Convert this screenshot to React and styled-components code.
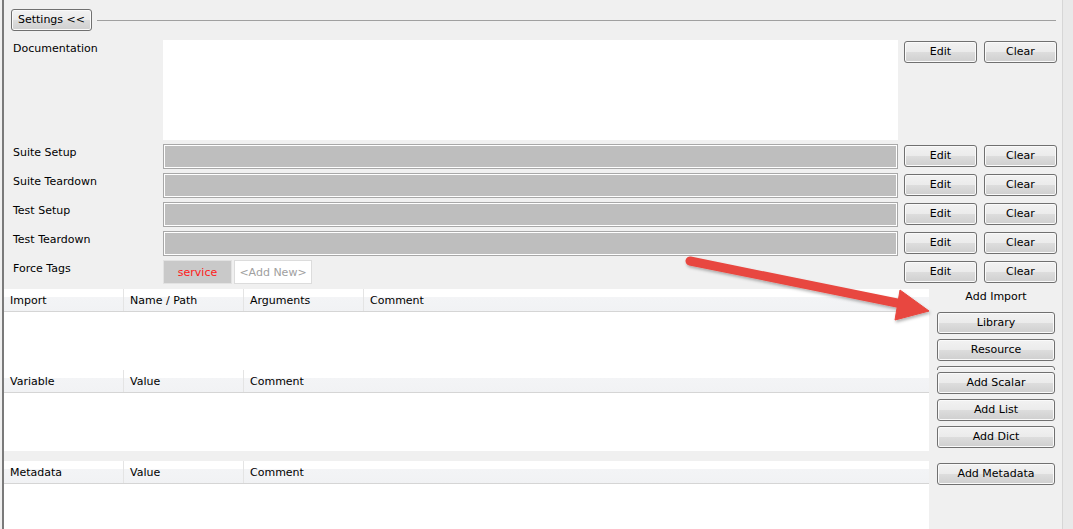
import React from "react";
import styled, { createGlobalStyle } from "styled-components";

const GlobalStyle = createGlobalStyle`
  *, *::before, *::after { box-sizing: border-box; }
  html, body { margin: 0; padding: 0; background: #f0f0f0; }
  body {
    font-family: "DejaVu Sans", Verdana, sans-serif;
    font-size: 11px;
    color: #000;
  }
`;

const Frame = styled.div`
  position: relative;
  width: 1073px;
  height: 529px;
  overflow: hidden;
  display: flex;
  background: #f0f0f0;
`;

const Main = styled.div`
  flex: 1;
  min-width: 0;
  margin-left: 2px;
  border-left: 2px solid #7a7a7a;
  display: flex;
  flex-direction: column;
`;

const ScrollStrip = styled.div`
  width: 11px;
  border-left: 1px solid #d6d6d6;
  background: #e9e9e9;
`;

const SettingsArea = styled.div`
  padding: 9px 5px 0 7px;
`;

const SettingsHeader = styled.div`
  display: flex;
  align-items: center;
  gap: 5px;
  height: 22px;
`;

const HeaderRule = styled.div`
  flex: 1;
  height: 1px;
  margin-right: 1px;
  background: #a0a0a0;
`;

const Button = styled.button`
  font-family: inherit;
  font-size: 11px;
  color: #000;
  height: 22px;
  width: ${(p) => p.$w || 73}px;
  flex-shrink: 0;
  padding: 0;
  margin: 0;
  margin-left: ${(p) => p.$ml || 0}px;
  margin-top: ${(p) => p.$mt || 0}px;
  border: 1px solid #707070;
  border-radius: 3px;
  background: linear-gradient(#f2f2f2 0%, #ebebeb 50%, #dddddd 51%, #cfcfcf 100%);
  box-shadow: inset 0 0 0 1px #fafafa;
  text-align: center;
  line-height: 20px;
`;

const Rows = styled.div`
  margin-top: 9px;
  display: flex;
  flex-direction: column;
  gap: 4px;
`;

const Row = styled.div`
  display: flex;
  align-items: flex-start;
`;

const Label = styled.div`
  width: 152px;
  padding-left: 2px;
  padding-top: 1px;
  line-height: 15px;
  flex-shrink: 0;
`;

const DocField = styled.div`
  flex: 1;
  height: 100px;
  background: #fff;
`;

const GrayField = styled.div`
  flex: 1;
  height: 25px;
  border: 1px solid #a8a8a8;
  box-shadow: inset 0 0 0 1px #ffffff;
  background: #bebebe;
`;

const TagField = styled.div`
  flex: 1;
  height: 24px;
  display: flex;
  gap: 2px;
`;

const Tag = styled.div`
  width: ${(p) => p.$w}px;
  height: 24px;
  display: flex;
  align-items: center;
  justify-content: center;
  border: 1px solid ${(p) => (p.$add ? "#dcdcdc" : "#e2e2e2")};
  background: ${(p) => (p.$add ? "#ffffff" : "#c9c9c9")};
  color: ${(p) => (p.$add ? "#a0a0a0" : "#ff1a1a")};
`;

const Lower = styled.div`
  margin-top: 5px;
  flex: 1;
  display: flex;
  flex-direction: column;
`;

const Section = styled.div`
  display: flex;
  height: ${(p) => (p.$h ? `${p.$h}px` : "auto")};
  flex: ${(p) => (p.$h ? "none" : "1")};
  margin-top: ${(p) => p.$mt || 0}px;
  overflow: hidden;
`;

const Grid = styled.div`
  flex: 1;
  background: #fff;
  display: flex;
  flex-direction: column;
`;

const GridHeader = styled.div`
  display: grid;
  grid-template-columns: ${(p) => "120px ".repeat(p.$n - 1)}1fr;
  height: 23px;
  border-bottom: 1px solid #d5d5d5;
  background: linear-gradient(#ffffff 0%, #ffffff 36%, #f3f4f6 37%, #f1f2f4 100%);
`;

const HeaderCell = styled.div`
  display: flex;
  align-items: center;
  padding-left: 6px;
  padding-top: 1px;
  border-right: 1px solid #e4e4e4;
  white-space: nowrap;
  &:last-child { border-right: none; }
`;

const Panel = styled.div`
  width: 133px;
  flex-shrink: 0;
  padding: ${(p) => p.$pt || 0}px 7px 0 8px;
  display: flex;
  flex-direction: column;
  gap: 5px;
  overflow: hidden;
`;

const PanelLabel = styled.div`
  height: 18px;
  line-height: 16px;
  text-align: center;
  flex-shrink: 0;
`;

const ArrowLayer = styled.svg`
  position: absolute;
  left: 0;
  top: 0;
  width: 1073px;
  height: 529px;
  pointer-events: none;
`;

const settingRows = ["Suite Setup", "Suite Teardown", "Test Setup", "Test Teardown"];

function GridTable({ cols }) {
  return (
    <Grid>
      <GridHeader $n={cols.length}>
        {cols.map((c) => (
          <HeaderCell key={c}>{c}</HeaderCell>
        ))}
      </GridHeader>
    </Grid>
  );
}

function EditClear() {
  return (
    <>
      <Button $ml={6} $mt={1}>Edit</Button>
      <Button $ml={7} $mt={1}>Clear</Button>
    </>
  );
}

export default function App() {
  return (
    <>
      <GlobalStyle />
      <Frame>
        <Main>
          <SettingsArea>
            <SettingsHeader>
              <Button $w={81}>Settings &lt;&lt;</Button>
              <HeaderRule />
            </SettingsHeader>
            <Rows>
              <Row>
                <Label>Documentation</Label>
                <DocField />
                <EditClear />
              </Row>
              {settingRows.map((r) => (
                <Row key={r}>
                  <Label>{r}</Label>
                  <GrayField />
                  <EditClear />
                </Row>
              ))}
              <Row>
                <Label>Force Tags</Label>
                <TagField>
                  <Tag $w={69}>service</Tag>
                  <Tag $w={78} $add>&lt;Add New&gt;</Tag>
                </TagField>
                <EditClear />
              </Row>
            </Rows>
          </SettingsArea>
          <Lower>
            <Section $h={81}>
              <GridTable cols={["Import", "Name / Path", "Arguments", "Comment"]} />
              <Panel>
                <PanelLabel>Add Import</PanelLabel>
                <Button $w={118}>Library</Button>
                <Button $w={118}>Resource</Button>
                <Button $w={118} aria-label="Variables" />
              </Panel>
            </Section>
            <Section $h={81}>
              <GridTable cols={["Variable", "Value", "Comment"]} />
              <Panel $pt={2}>
                <Button $w={118}>Add Scalar</Button>
                <Button $w={118}>Add List</Button>
                <Button $w={118}>Add Dict</Button>
              </Panel>
            </Section>
            <Section $mt={10}>
              <GridTable cols={["Metadata", "Value", "Comment"]} />
              <Panel $pt={2}>
                <Button $w={118}>Add Metadata</Button>
              </Panel>
            </Section>
          </Lower>
        </Main>
        <ScrollStrip />
        <ArrowLayer viewBox="0 0 1073 529">
          <defs>
            <filter id="arrowShadow" x="-10%" y="-50%" width="120%" height="200%">
              <feDropShadow dx="1" dy="2" stdDeviation="1.5" floodColor="#000" floodOpacity="0.3" />
            </filter>
          </defs>
          <g filter="url(#arrowShadow)" fill="#e8473f" stroke="#e8473f">
            <line x1="690" y1="261" x2="902" y2="304" strokeWidth="9" strokeLinecap="round" />
            <polygon points="900,290 929,311 895,320" strokeWidth="1" strokeLinejoin="round" />
          </g>
        </ArrowLayer>
      </Frame>
    </>
  );
}
